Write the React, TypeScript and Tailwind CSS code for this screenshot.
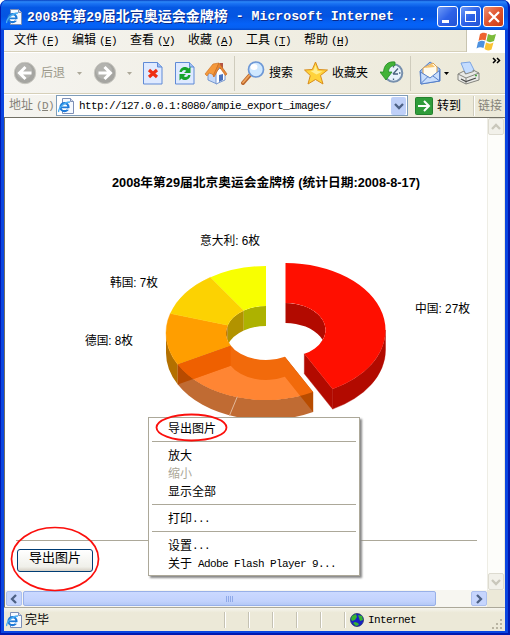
import React from "react";

const CJK = "font-['Liberation_Sans','Noto_Sans_CJK_SC',sans-serif]";
const MONO = "font-['Liberation_Mono','Noto_Sans_CJK_SC',monospace]";

type Pt = [number, number];

/* Point on a ring ellipse; the angle runs clockwise from twelve o'clock. */
function pt(cx: number, cy: number, rx: number, ry: number, deg: number): Pt {
  const r = (deg * Math.PI) / 180;
  return [cx + rx * Math.sin(r), cy - ry * Math.cos(r)];
}
const OUT: Pt = [100, 67];
const INN: Pt = [40, 27];
const DEPTH = 20;
const s = (p: Pt) => `${p[0].toFixed(2)} ${p[1].toFixed(2)}`;

function face(cx: number, cy: number, a: number, b: number) {
  const big = b - a > 180 ? 1 : 0;
  return `M${s(pt(cx, cy, ...OUT, a))}A100 67 0 ${big} 1 ${s(pt(cx, cy, ...OUT, b))}L${s(pt(cx, cy, ...INN, b))}A40 27 0 ${big} 0 ${s(pt(cx, cy, ...INN, a))}Z`;
}
function wall(cx: number, cy: number, r: Pt, a: number, b: number) {
  return `M${s(pt(cx, cy, ...r, a))}A${r[0]} ${r[1]} 0 0 1 ${s(pt(cx, cy, ...r, b))}v${DEPTH}A${r[0]} ${r[1]} 0 0 0 ${s(pt(cx, cy + DEPTH, ...r, a))}Z`;
}
function cut(cx: number, cy: number, a: number) {
  return `M${s(pt(cx, cy, ...INN, a))}L${s(pt(cx, cy, ...OUT, a))}v${DEPTH}L${s(pt(cx, cy + DEPTH, ...INN, a))}Z`;
}

const LABELS = [
  { x: 200, y: 245, w: 60, t: "意大利: 6枚" },
  { x: 110, y: 287, w: 48, t: "韩国: 7枚" },
  { x: 85, y: 345, w: 48, t: "德国: 8枚" },
  { x: 415, y: 313, w: 55, t: "中国: 27枚" },
];

function Chart() {
  const X = 266;
  const Y = 333;
  const RX = 285.5;
  const RY = 330;
  const A = 151.9;
  const B = 241.9;
  const C = 286.9;
  const D = 326.25;
  return (
    <svg className="block h-[350px] w-[482px]" viewBox="5 118 482 350">
      <defs>
        <clipPath id="holeL"><ellipse cx={X} cy={Y} rx="40.3" ry="27.3" /></clipPath>
        <clipPath id="holeR"><ellipse cx={RX} cy={RY} rx="40.3" ry="27.3" /></clipPath>
        <clipPath id="topUs"><path d={face(X, Y, A, B)} /></clipPath>
      </defs>
      <text x="112" y="187" textLength="308" lengthAdjust="spacingAndGlyphs" className={`text-[12px] font-bold ${CJK}`}>
        2008年第29届北京奥运会金牌榜 (统计日期:2008-8-17)
      </text>
      {LABELS.map((l) => (
        <text key={l.t} x={l.x} y={l.y} textLength={l.w} lengthAdjust="spacingAndGlyphs" className={`text-[12px] ${CJK}`}>{l.t}</text>
      ))}
      <g clipPath="url(#holeL)">
        <path d={wall(X, Y, INN, 235, C)} fill="#b07000" />
        <path d={wall(X, Y, INN, C, D)} fill="#b29300" />
        <path d={wall(X, Y, INN, D, 360)} fill="#adb200" />
      </g>
      <path d={wall(X, Y, OUT, B, 270)} fill="#b37000" />
      <path d={face(X, Y, B, C)} fill="#ff9e00" stroke="#ff9e00" strokeWidth=".4" />
      <path d={face(X, Y, C, D)} fill="#fcd202" stroke="#fcd202" strokeWidth=".4" />
      <path d={face(X, Y, D, 360)} fill="#f8ff01" />
      <path d={wall(X, Y, OUT, A, B)} fill="#c06b33" />
      <path d={cut(X, Y, A)} fill="#b84c00" />
      <path d={cut(X, Y, B)} fill="#b84b00" />
      <path d={face(X, Y, A, B)} fill="#f26a0b" />
      <g clipPath="url(#topUs)">
        <path d={face(X, Y + DEPTH, A, B)} fill="#ff8533" />
        <path d={cut(X, Y, B)} fill="#ef6000" />
      </g>
      <path d="M237.3 396.7L229.3 416" stroke="#e3b899" strokeWidth="1" />
      <g clipPath="url(#holeR)">
        <path d={wall(RX, RY, INN, 0, 120)} fill="#b20a00" />
      </g>
      <path d={wall(RX, RY, OUT, 90, A)} fill="#b20a00" stroke="#b20a00" strokeWidth=".4" />
      <path d={cut(RX, RY, A)} fill="#b20a00" stroke="#b20a00" strokeWidth=".4" />
      <path d={face(RX, RY, 0, A)} fill="#ff0f00" />
    </svg>
  );
}

function IePage({ className }: { className: string }) {
  return (
    <svg className={className} viewBox="0 0 16 16">
      <path d="M4.500 .5h8l3 3v12h-11z" fill="#f6f9ff" stroke="#7d8fb5" />
      <path d="M12.500.5v3h3" fill="#cfd9ec" stroke="#7d8fb5" />
      <circle cx="6.500" cy="9.200" r="4" fill="#fff" stroke="#1f7ad8" strokeWidth="2.200" />
      <path d="M3 9.300h8" stroke="#1f7ad8" strokeWidth="1.800" />
      <path d="M9.500 10.300h3v1.400H9z" fill="#fff" />
      <path d="M.8 14C-.3 11 5.500 4.200 12 4" fill="none" stroke="#49aef2" strokeWidth="1.300" />
    </svg>
  );
}

function Nav({ forward }: { forward?: boolean }) {
  return (
    <svg className="size-6 shrink-0" viewBox="0 0 24 24">
      <circle cx="12" cy="12" r="10.700" fill="#a5a5a1" stroke="#c9c8c1" />
      <circle cx="11" cy="10" r="8" fill="#b3b3af" />
      <path d={forward ? "M5.500 12h11M11.500 6l6 6-6 6" : "M18.500 12h-11M12.500 6l-6 6 6 6"} fill="none" stroke="#fff" strokeWidth="3" />
    </svg>
  );
}

function Caret({ dark }: { dark?: boolean }) {
  return <svg className="h-[3px] w-[5px] shrink-0" viewBox="0 0 5 3"><path d="M0 0h5L2.500 3z" fill={dark ? "#000" : "#aca899"} /></svg>;
}

function Sheet({ children }: { children: React.ReactNode }) {
  return (
    <svg className="h-[24px] w-[20px] shrink-0" viewBox="0 0 20 24">
      <path d="M.5 1.500h14l4.500 4.500v17H.500z" fill="#dfeaff" stroke="#5f8ad6" />
      <path d="M14.500 1.500v4.500h4.500" fill="#9fbff2" stroke="#5f8ad6" />
      {children}
    </svg>
  );
}

function Home() {
  return (
    <svg className="size-6 shrink-0" viewBox="0 0 24 24">
      <path d="M4 12v7l9 4V10L9 5z" fill="#c5d9f9" stroke="#7697cf" />
      <path d="M12 23l9-4v-8l-4-5-5 5z" fill="#fff" stroke="#7697cf" />
      <path d="M16 2h3v6h-3z" fill="#b35545" />
      <path d="M1 13L9 3l6-1-5 13-2-2-3-1-2 3z" fill="#f59a3c" stroke="#d0762a" strokeWidth=".7" />
      <path d="M9 15l6-13 8 11-1.500 1.500L15.500 6 10 16z" fill="#e98a35" stroke="#c56a22" strokeWidth=".7" />
      <path d="M15 21v-7l4-1v6z" fill="#4a72bd" />
    </svg>
  );
}

function Magnifier() {
  return (
    <svg className="size-6 shrink-0" viewBox="0 0 24 24">
      <path d="M9 14L2 22" stroke="#b9662d" strokeWidth="4" strokeLinecap="round" />
      <path d="M9 13.500L2 21.500" stroke="#f0a55c" strokeWidth="1.800" strokeLinecap="round" />
      <circle cx="15" cy="8.500" r="7.500" fill="#cfe8ff" stroke="#6d98d6" strokeWidth="1.700" />
      <ellipse cx="13" cy="6" rx="3.500" ry="3" fill="#fff" />
    </svg>
  );
}

function Star() {
  return (
    <svg className="size-6 shrink-0" viewBox="0 0 24 24">
      <path d="M11.500 1l3 7.500 9 .5-7 5.500 2.500 8.500-7.500-4.500L4 23l2.300-8.500L.5 9l7.800-.5z" fill="#ffd33b" stroke="#d98d1c" />
      <path d="M11.500 4l2 6 5 .5-6 3-6-3.500 3-.5z" fill="#ffef92" />
    </svg>
  );
}

function HistoryIcon() {
  return (
    <svg className="size-6 shrink-0" viewBox="0 0 24 24">
      <circle cx="13.500" cy="12" r="8.800" fill="#e8f2fb" stroke="#7890ad" strokeWidth="2" />
      <path d="M13 13l5-5.500M13 13h5M13.500 5v1.500M20.500 12H19M13.500 19v-1.500" stroke="#48627f" strokeWidth="1.300" />
      <path d="M15 1C8 0 4 4 3.500 11H0l6 8 6-8H8.500C8.500 7 11 4.500 15 4.500z" fill="#42b338" stroke="#238b25" strokeWidth=".8" />
    </svg>
  );
}

function Mail() {
  return (
    <svg className="h-6 w-[22px] shrink-0" viewBox="0 0 22 24">
      <path d="M1 10L11 1l10 7v12L2 23z" fill="#9dc1f4" stroke="#557fc8" />
      <path d="M4 7l10-5 4 4v8l-7 4-7-4z" fill="#fffbed" stroke="#e0a24a" />
      <path d="M5 7l8-4 3 3z" fill="#f8c46b" />
      <path d="M1.500 11l9.500 6 9.500-7.500V20L2 23z" fill="#c9defc" stroke="#557fc8" />
      <path d="M2 22.500l7-7M20 19.500l-6-4.500" stroke="#557fc8" />
    </svg>
  );
}

function Printer() {
  return (
    <svg className="h-6 w-[24px] shrink-0" viewBox="0 0 24 24">
      <path d="M4 2l9-1 5 10-9 3z" fill="#c3dcff" stroke="#7ba4e2" />
      <path d="M1 13l6-3 1.500 3 8-2.500L16 9l6 3v7L9 23 1 19z" fill="#e9e9e6" stroke="#85857f" />
      <path d="M1 13l8 4 13-5M9 17v6" fill="none" stroke="#85857f" />
      <path d="M4 18l5 2.500 10-3.500" fill="none" stroke="#4c4c4c" strokeWidth="1.300" />
      <path d="M18 14.500h2" stroke="#42a73d" strokeWidth="1.500" />
    </svg>
  );
}

function Flag() {
  return (
    <svg className="h-[19px] w-[21px]" viewBox="0 0 21 19">
      <path d="M4 2c3-2 4-1.500 7-.5L9.500 8.500C7 7.500 5 7.500 2.500 9z" fill="#ee6430" />
      <path d="M12 2c3 1.500 5 1.500 8 0l-2 7c-3 1.500-5 1.500-7.500 0z" fill="#7cbb3c" />
      <path d="M2 10c3-1.500 4.500-1.500 7-.5L7.500 16C5 15 3 15 .5 16.500z" fill="#4d91df" />
      <path d="M10 10.500c3 1.500 5 1.500 7.500 0l-2 7c-3 1.500-5 1-7-.5z" fill="#fac334" />
    </svg>
  );
}

function Chevron({ dir, muted }: { dir: "up" | "down" | "left" | "right"; muted?: boolean }) {
  const d = { up: "M1 7l4-4 4 4", down: "M1 3l4 4 4-4", left: "M7 1L3 5l4 4", right: "M3 1l4 4-4 4" }[dir];
  return <svg className="size-[10px]" viewBox="0 0 10 10"><path d={d} fill="none" stroke={muted ? "#c9c7bb" : "#4d6185"} strokeWidth="2.300" /></svg>;
}

function Key({ k }: { k: string }) {
  return <span className="ml-[3px] text-[11px] tracking-[-0.6px] font-['Liberation_Mono']">(<u className="underline-offset-1">{k}</u>)</span>;
}

/* Half-width Latin run, six pixels to the character. */
function Latin({ children }: { children: string }) {
  return <span className="whitespace-pre text-[11px] tracking-[-0.6px] font-['Liberation_Mono']">{children}</span>;
}

const MENUS: [string, string][] = [
  ["文件", "F"],
  ["编辑", "E"],
  ["查看", "V"],
  ["收藏", "A"],
  ["工具", "T"],
  ["帮助", "H"],
];

function Sep() {
  return <div className="mx-[3px] h-px shrink-0 bg-[#aca899]" />;
}

function Item({ children, muted }: { children: React.ReactNode; muted?: boolean }) {
  return <div className={`flex h-[18px] items-center whitespace-pre pl-[19px] ${muted ? "text-[#aca899]" : "text-black"}`}>{children}</div>;
}

export default function App() {
  return (
    <div className={`relative flex h-[635px] w-[510px] flex-col overflow-hidden whitespace-nowrap rounded-t-[7px] bg-[#0a45e0] text-[12px] leading-none text-black ${CJK}`}>
      {/* Title bar */}
      <div className="flex h-[30px] shrink-0 items-center bg-[linear-gradient(180deg,#0840c0_0%,#2b87f8_6%,#1a72f3_12%,#0558e4_25%,#0455e2_55%,#0562f8_80%,#0560f2_92%,#0349cc_100%)] pt-[3px] pl-[6px]">
        <IePage className="size-4" />
        <div className="ml-[5px] flex w-[412px] items-center whitespace-pre font-bold text-white [text-shadow:1px_1px_0_#0a2a8a]">
          <span className={`text-[14px] ${MONO}`}>
            <span className="text-[13px]">2008</span>年第<span className="text-[13px]">29</span>届北京奥运会金牌榜
          </span>
          <span className="text-[13.200px] font-['Liberation_Mono']"> - Microsoft Internet ...</span>
        </div>
        <div className="ml-[-2px] flex gap-[2px]">
          <div className="flex size-[21px] items-end rounded-[3px] border border-white bg-[linear-gradient(135deg,#6f9bf7,#2e62e8_50%,#2253d4)] pb-[3px] pl-[4px]"><i className="h-[3px] w-[7px] bg-white" /></div>
          <div className="flex size-[21px] items-center justify-center rounded-[3px] border border-white bg-[linear-gradient(135deg,#6f9bf7,#2e62e8_50%,#2253d4)]"><i className="h-[11px] w-[11px] border border-t-[3px] border-white" /></div>
          <div className="flex size-[21px] items-center justify-center rounded-[3px] border border-white bg-[linear-gradient(135deg,#ee9070,#e0532e_50%,#c93b12)]">
            <svg className="size-[12px]" viewBox="0 0 12 12"><path d="M1 1l10 10M11 1L1 11" stroke="#fff" strokeWidth="2.200" /></svg>
          </div>
        </div>
      </div>

      <div className="mr-[5px] ml-[4px] flex h-[601px] flex-col bg-[#ece9d8]">
        {/* Menu bar */}
        <div className="flex h-[22px] shrink-0 bg-[linear-gradient(90deg,#f5f4f0,#ece9d8)]">
          <div className="flex flex-1 items-center border-b border-[#d6d0b9] pl-[10px]">
            {MENUS.map(([t, k]) => <div key={k} className="w-[58px]">{t}<Key k={k} /></div>)}
          </div>
          <div className="flex w-[39px] items-center justify-center border-l border-[#c8c4b0] bg-white"><Flag /></div>
        </div>

        {/* Toolbar */}
        <div className="flex h-[41px] shrink-0 items-center border-t border-white bg-[linear-gradient(90deg,#f5f4f0,#ece9d8)] pl-[9px]">
          <Nav /><span className="mr-[12px] ml-[4px] text-[#9b988a]">后退</span><Caret />
          <div className="w-[11px]" /><Nav forward /><div className="w-[10px]" /><Caret />
          <div className="w-[11px]" />
          <Sheet><path d="M6 9l8 7M14 9l-8 7" stroke="#ee2f12" strokeWidth="3.200" /></Sheet>
          <div className="w-[12px]" />
          <Sheet>
            <path d="M4.500 11c.5-5 6.500-6.500 9-3.500L15.500 5.500V12H9l2.300-2.300C9 8 7 9.500 7 11zM15.500 14c-.5 5-6.500 6.500-9 3.500L4.500 19.500V13H11l-2.300 2.300C11 17 13 15.500 13 14z" fill="#16a32c" />
          </Sheet>
          <div className="w-[9px]" /><Home />
          <div className="mr-[6px] ml-[6px] h-[35px] w-px shrink-0 bg-[#cfccbd]" />
          <Magnifier /><span className="mr-[11px] ml-[4px]">搜索</span>
          <Star /><span className="mr-[12px] ml-[4px]">收藏夹</span>
          <HistoryIcon />
          <div className="mr-[8px] ml-[6px] h-[35px] w-px shrink-0 bg-[#cfccbd]" />
          <Mail /><div className="w-[3px]" /><Caret dark /><div className="w-[8px]" /><Printer />
          <svg className="mb-[25px] ml-[11px] h-[7px] w-[9px] shrink-0" viewBox="0 0 9 7"><path d="M1 1l2.500 2.500L1 6M5 1l2.500 2.500L5 6" fill="none" stroke="#000" strokeWidth="1.500" /></svg>
        </div>

        {/* Address bar */}
        <div className="flex h-[24px] shrink-0 items-center border-t border-[#d6d0b9] bg-[linear-gradient(90deg,#f5f4f0,#ece9d8)] pl-[5px] shadow-[inset_0_1px_0_#fff]">
          <div className="w-[47px] shrink-0 text-[#858278]">地址<Key k="D" /></div>
          <div className="flex h-[21px] w-[352px] shrink-0 items-center border border-[#7f9db9] bg-white pr-px">
            <IePage className="ml-px size-4" />
            <span className="ml-[5px] flex-1"><Latin>http://127.0.0.1:8080/ampie_export_images/</Latin></span>
            <div className="flex h-[18px] w-[15px] items-center justify-center rounded-[2px] bg-[#bfd0f8]"><Chevron dir="down" /></div>
          </div>
          <svg className="ml-[7px] size-[18px] shrink-0" viewBox="0 0 18 18">
            <rect x=".5" y=".5" width="17" height="17" rx="1" fill="#2f9c3a" stroke="#23802e" />
            <path d="M3 9h11M9 4l5 5-5 5" fill="none" stroke="#fff" strokeWidth="2" />
          </svg>
          <span className="ml-[4px] w-[36px]">转到</span>
          <div className="h-[20px] w-[2px] border-l border-[#cfccbd] bg-white" />
          <span className="ml-[3px] text-[#858278]">链接</span>
        </div>

        {/* Page */}
        <div className="flex h-[473px] shrink-0 border-t border-l border-[#716f64]">
          <div className="relative w-[482px] shrink-0 bg-white">
            <Chart />
            <div className="mt-[72px] ml-[11px] h-px w-[461px] bg-[#aca899]" />
            <button className="mt-[8px] ml-[12px] flex h-[23px] w-[76px] justify-center rounded-[3px] border border-[#003c74] bg-[linear-gradient(180deg,#fff,#f0f0ea_80%,#d6d0c5)] pt-px text-[13px] leading-[13px]">导出图片</button>
            <svg className="absolute top-[408px] left-[5px] h-[66px] w-[90px]" viewBox="0 0 90 66"><ellipse cx="45" cy="33" rx="43.500" ry="31.500" fill="none" stroke="#fb0f0c" strokeWidth="1.700" /></svg>

            {/* Flash context menu */}
            <div className={`absolute top-[299px] left-[143px] flex h-[159px] w-[212px] flex-col border border-[#aca899] bg-white pt-[2px] shadow-[2px_2px_2px_#888] ${CJK}`}>
              <Item>导出图片</Item>
              <div className="h-[3px]" /><Sep /><div className="h-[5px]" />
              <Item>放大</Item><Item muted>缩小</Item><Item>显示全部</Item>
              <div className="h-[3px]" /><Sep /><div className="h-[5px]" />
              <Item>打印<Latin>...</Latin></Item>
              <div className="h-[3px]" /><Sep /><div className="h-[5px]" />
              <Item>设置<Latin>...</Latin></Item>
              <Item>关于<Latin> Adobe Flash Player 9...</Latin></Item>
              <svg className="absolute top-[-5px] left-[6px] h-[29px] w-[74px]" viewBox="0 0 74 29"><ellipse cx="36.500" cy="14.500" rx="35" ry="13" fill="none" stroke="#fb0f0c" strokeWidth="1.800" /></svg>
            </div>
          </div>
          <div className="flex w-[17px] shrink-0 flex-col justify-between border-l border-[#eeede5] bg-[#fdfdfa]">
            <div className="flex h-[17px] w-[16px] items-center justify-center rounded-[2px] border border-[#dddbd0] bg-[#f2f1ea]"><Chevron dir="up" muted /></div>
            <div className="flex h-[17px] w-[16px] items-center justify-center rounded-[2px] border border-[#dddbd0] bg-[#f2f1ea]"><Chevron dir="down" muted /></div>
          </div>
        </div>
        <div className="flex h-[17px] shrink-0 items-center border-l border-[#716f64]">
          <div className="flex h-[17px] w-[482px] items-center bg-[#f7f6f1] pl-px">
            <div className="flex h-[15px] w-[16px] items-center justify-center rounded-[2px] border border-[#adc0ee] bg-[#c6d5fd]"><Chevron dir="left" /></div>
            <div className="ml-px flex h-[15px] w-[413px] items-center justify-center gap-px rounded-[2px] border border-[#98b0e8] bg-[linear-gradient(180deg,#cbd9ff,#c2d2fd_70%,#b4c8f6)]">
              <i className="h-[6px] w-px bg-[#8fa9e8]" /><i className="h-[6px] w-px bg-[#8fa9e8]" /><i className="h-[6px] w-px bg-[#8fa9e8]" /><i className="h-[6px] w-px bg-[#8fa9e8]" />
            </div>
            <div className="ml-[35px] flex h-[15px] w-[16px] items-center justify-center rounded-[2px] border border-[#adc0ee] bg-[#c6d5fd]"><Chevron dir="right" /></div>
          </div>
        </div>

        {/* Status bar */}
        <div className="flex h-[24px] shrink-0 items-center border-t border-[#aca899] bg-[linear-gradient(180deg,#f6f5ee,#ece9d8_20%,#ece9d8)] pl-[2px]">
          <IePage className="size-4" />
          <span className="ml-[3px] w-[199px]">完毕</span>
          {[0, 1, 2, 3, 4, 5].map((i) => <div key={i} className="h-[16px] w-[24px] border-l border-[#c5c2b3] shadow-[inset_1px_0_0_#fff]" />)}
          <svg className="ml-[-18px] size-[14px]" viewBox="0 0 14 14">
            <circle cx="7" cy="7" r="6.500" fill="#1821c4" stroke="#15225c" strokeWidth=".7" />
            <path d="M2 3l4-2 1 3-2 3-3 1-1-2zM8 2l4 1 1 4-3 1-1-3zM5 9l3 1 1 2-3 1-3-3z" fill="#37b531" />
          </svg>
          <span className="ml-[4px] flex-1"><Latin>Internet</Latin></span>
          <svg className="mt-[9px] mr-[2px] size-[12px]" viewBox="0 0 12 12" fill="#b8b4a2"><path d="M9 1h2v2H9zM5 5h2v2H5zM9 5h2v2H9zM1 9h2v2H1zM5 9h2v2H5zM9 9h2v2H9z" /></svg>
        </div>
      </div>
      <div className="pointer-events-none absolute inset-0 rounded-t-[7px] border-r-2 border-b-2 border-l border-[#0019b0]" />
    </div>
  );
}
